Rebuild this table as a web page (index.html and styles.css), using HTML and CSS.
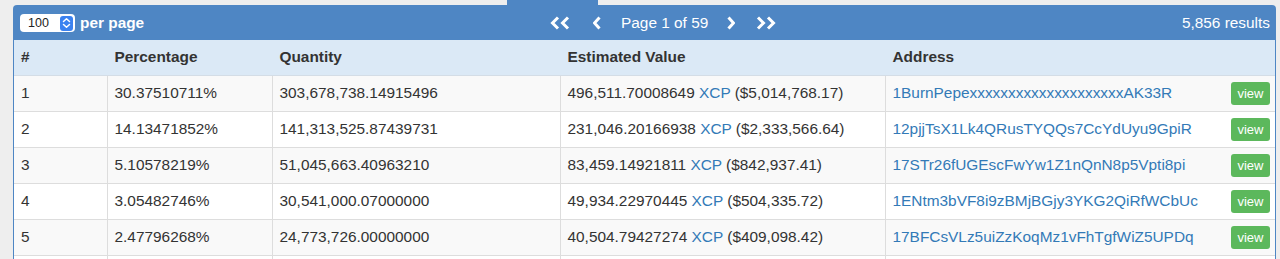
FILE: index.html
```html
<!DOCTYPE html>
<html>
<head>
<meta charset="utf-8">
<link rel="stylesheet" href="styles.css">
</head>
<body>
<div class="page">
  <div class="tabrow"><div class="tab"></div></div>
  <div class="panel">
    <div class="bar">
      <div class="perpage">
        <div class="select"><span class="selval">100</span><span class="stepper"><svg width="9" height="12" viewBox="0 0 9 12"><polyline points="1.5,4.5 4.5,1.8 7.5,4.5" fill="none" stroke="#fff" stroke-width="1.5" stroke-linecap="round" stroke-linejoin="round"/><polyline points="1.5,7.5 4.5,10.2 7.5,7.5" fill="none" stroke="#fff" stroke-width="1.5" stroke-linecap="round" stroke-linejoin="round"/></svg></span></div>
        <span class="pp">per page</span>
      </div>
      <div class="pager">
        <svg class="dbl" width="20" height="14" viewBox="0 0 20 14"><polyline points="8,1.5 2.5,7 8,12.5" fill="none" stroke="#fff" stroke-width="3"/><polyline points="18,1.5 12.5,7 18,12.5" fill="none" stroke="#fff" stroke-width="3"/></svg>
        <svg class="sgl prev" width="8" height="14" viewBox="0 0 8 14"><polyline points="6.5,1.5 1.5,7 6.5,12.5" fill="none" stroke="#fff" stroke-width="3"/></svg>
        <span class="pagetext">Page 1 of 59</span>
        <svg class="sgl next" width="8" height="14" viewBox="0 0 8 14"><polyline points="1.5,1.5 6.5,7 1.5,12.5" fill="none" stroke="#fff" stroke-width="3"/></svg>
        <svg class="dbl last" width="20" height="14" viewBox="0 0 20 14"><polyline points="2,1.5 7.5,7 2,12.5" fill="none" stroke="#fff" stroke-width="3"/><polyline points="12,1.5 17.5,7 12,12.5" fill="none" stroke="#fff" stroke-width="3"/></svg>
      </div>
      <div class="results">5,856 results</div>
    </div>
    <table class="tbl">
      <colgroup>
        <col class="c1"><col class="c2"><col class="c3"><col class="c4"><col class="c5">
      </colgroup>
      <thead>
        <tr><th>#</th><th>Percentage</th><th>Quantity</th><th>Estimated Value</th><th>Address</th></tr>
      </thead>
      <tbody>
        <tr class="odd"><td>1</td><td>30.37510711%</td><td>303,678,738.14915496</td><td>496,511.70008649 <a>XCP</a> ($5,014,768.17)</td><td><div class="addr"><a>1BurnPepexxxxxxxxxxxxxxxxxxxxAK33R</a><span class="view">view</span></div></td></tr>
        <tr><td>2</td><td>14.13471852%</td><td>141,313,525.87439731</td><td>231,046.20166938 <a>XCP</a> ($2,333,566.64)</td><td><div class="addr"><a>12pjjTsX1Lk4QRusTYQQs7CcYdUyu9GpiR</a><span class="view">view</span></div></td></tr>
        <tr class="odd"><td>3</td><td>5.10578219%</td><td>51,045,663.40963210</td><td>83,459.14921811 <a>XCP</a> ($842,937.41)</td><td><div class="addr"><a>17STr26fUGEscFwYw1Z1nQnN8p5Vpti8pi</a><span class="view">view</span></div></td></tr>
        <tr><td>4</td><td>3.05482746%</td><td>30,541,000.07000000</td><td>49,934.22970445 <a>XCP</a> ($504,335.72)</td><td><div class="addr"><a>1ENtm3bVF8i9zBMjBGjy3YKG2QiRfWCbUc</a><span class="view">view</span></div></td></tr>
        <tr class="odd"><td>5</td><td>2.47796268%</td><td>24,773,726.00000000</td><td>40,504.79427274 <a>XCP</a> ($409,098.42)</td><td><div class="addr"><a>17BFCsVLz5uiZzKoqMz1vFhTgfWiZ5UPDq</a><span class="view">view</span></div></td></tr>
        <tr class="stub"><td></td><td></td><td></td><td></td><td></td></tr>
      </tbody>
    </table>
  </div>
</div>
</body>
</html>
```

FILE: styles.css
```css
html, body {
  margin: 0;
  padding: 0;
  background: #eeeeee;
  overflow: hidden;
}
body {
  font-family: "Liberation Sans", Arial, Helvetica, sans-serif;
  font-size: 15.4px;
  color: #333333;
}
.page {
  padding: 0 4px 0 13px;
}
.tabrow {
  height: 5px;
  display: flex;
}
.tab {
  margin-left: 494px;
  width: 91px;
  height: 5px;
  background: #4e86c4;
}
.panel {
  border: 1px solid #4e86c4;
  border-bottom: none;
  border-radius: 4px 4px 0 0;
  background: #ffffff;
}
.bar {
  height: 34px;
  background: #4e86c4;
  color: #ffffff;
  display: grid;
  grid-template-columns: 529px auto 1fr;
  align-items: center;
  padding: 0 5px 0 6px;
}
.perpage {
  display: flex;
  align-items: center;
  gap: 5px;
}
.select {
  width: 55px;
  height: 18px;
  background: #ffffff;
  border-radius: 4px;
  display: flex;
  align-items: center;
  justify-content: space-between;
  padding: 0 2px 0 8px;
  box-sizing: border-box;
  color: #222;
}
.selval {
  font-size: 12.5px;
}
.stepper {
  width: 13px;
  height: 15px;
  background: #3b82f0;
  border-radius: 3px;
  display: flex;
  align-items: center;
  justify-content: center;
}
.pp {
  font-weight: bold;
}
.pager {
  display: flex;
  align-items: center;
  margin-left: 1px;
}
.pager svg {
  display: block;
}
.prev { margin-left: 23px; }
.pagetext { margin-left: 20px; margin-right: 19px; }
.last { margin-left: 21px; }
.results {
  text-align: right;
}
.tbl {
  width: 100%;
  border-collapse: collapse;
}
.c1 { width: 93px; }
.c2 { width: 165px; }
.c3 { width: 288px; }
.c4 { width: 325px; }
.tbl th {
  background: #dbe9f6;
  font-weight: bold;
  text-align: left;
  height: 35px;
  padding: 0 7px;
  border-left: 1px solid #dbe9f6;
  border-right: 1px solid #dbe9f6;
  border-top: none;
  border-bottom: 1px solid #d4dde6;
  box-sizing: border-box;
}
.tbl td {
  height: 36px;
  padding: 0 7px;
  border: 1px solid #dddddd;
  box-sizing: border-box;
  white-space: nowrap;
}
.tbl td:last-child {
  padding-right: 5px;
}
.tbl tr.stub td {
  height: 10px;
  background: #ffffff;
}
.tbl tr td:first-child, .tbl tr th:first-child { border-left: none; }
.tbl tr td:last-child, .tbl tr th:last-child { border-right: none; }
.tbl tr.odd td { background: #f9f9f9; }
.tbl a {
  color: #337ab7;
  text-decoration: none;
}
.addr {
  display: flex;
  align-items: center;
  justify-content: space-between;
}
.view {
  background: #5cb85c;
  color: #ffffff;
  font-size: 13px;
  height: 23px;
  line-height: 23px;
  padding: 0 6.5px;
  border-radius: 3px;
}
```
